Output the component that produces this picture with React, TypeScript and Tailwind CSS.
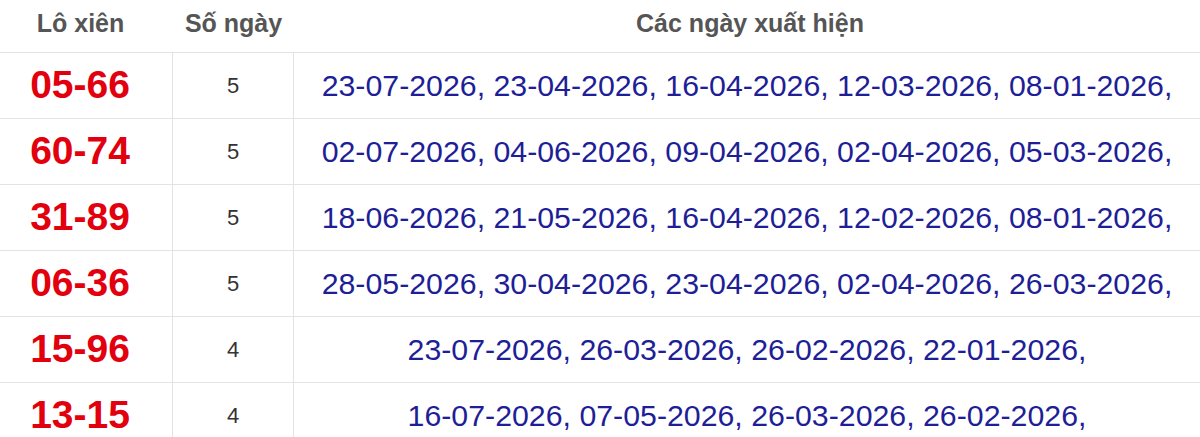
import React from "react";

const rows: { code: string; n: number; dates: string[] }[] = [
  { code: "05-66", n: 5, dates: ["23-07-2026", "23-04-2026", "16-04-2026", "12-03-2026", "08-01-2026"] },
  { code: "60-74", n: 5, dates: ["02-07-2026", "04-06-2026", "09-04-2026", "02-04-2026", "05-03-2026"] },
  { code: "31-89", n: 5, dates: ["18-06-2026", "21-05-2026", "16-04-2026", "12-02-2026", "08-01-2026"] },
  { code: "06-36", n: 5, dates: ["28-05-2026", "30-04-2026", "23-04-2026", "02-04-2026", "26-03-2026"] },
  { code: "15-96", n: 4, dates: ["23-07-2026", "26-03-2026", "26-02-2026", "22-01-2026"] },
  { code: "13-15", n: 4, dates: ["16-07-2026", "07-05-2026", "26-03-2026", "26-02-2026"] },
];

export default function App() {
  return (
    <div
      className="w-[1200px] h-[437px] overflow-hidden bg-white"
      style={{ fontFamily: '"Liberation Sans", Arial, sans-serif' }}
    >
      <div className="flex h-[52px] items-center pb-[4px] text-[25px] font-bold text-[#555555]">
        <div className="w-[173px] pr-[12px] text-center">Lô xiên</div>
        <div className="w-[121px] text-center">Số ngày</div>
        <div className="flex-1 pl-[6px] text-center">Các ngày xuất hiện</div>
      </div>
      {rows.map((r) => (
        <div key={r.code} className="flex h-[66px] border-t border-[#e3e3e3]">
          <div className="flex w-[173px] items-center justify-center border-r border-[#e3e3e3] pr-[12px] text-[39px] font-bold text-[#e2000e]">
            {r.code}
          </div>
          <div className="flex w-[121px] items-center justify-center border-r border-[#e3e3e3] text-[22px] text-[#333333]">
            {r.n}
          </div>
          <div className="flex flex-1 items-center justify-center text-[30.3px] text-[#1e1e96]">
            {r.dates.map((d) => d + ",").join(" ")}
          </div>
        </div>
      ))}
    </div>
  );
}
